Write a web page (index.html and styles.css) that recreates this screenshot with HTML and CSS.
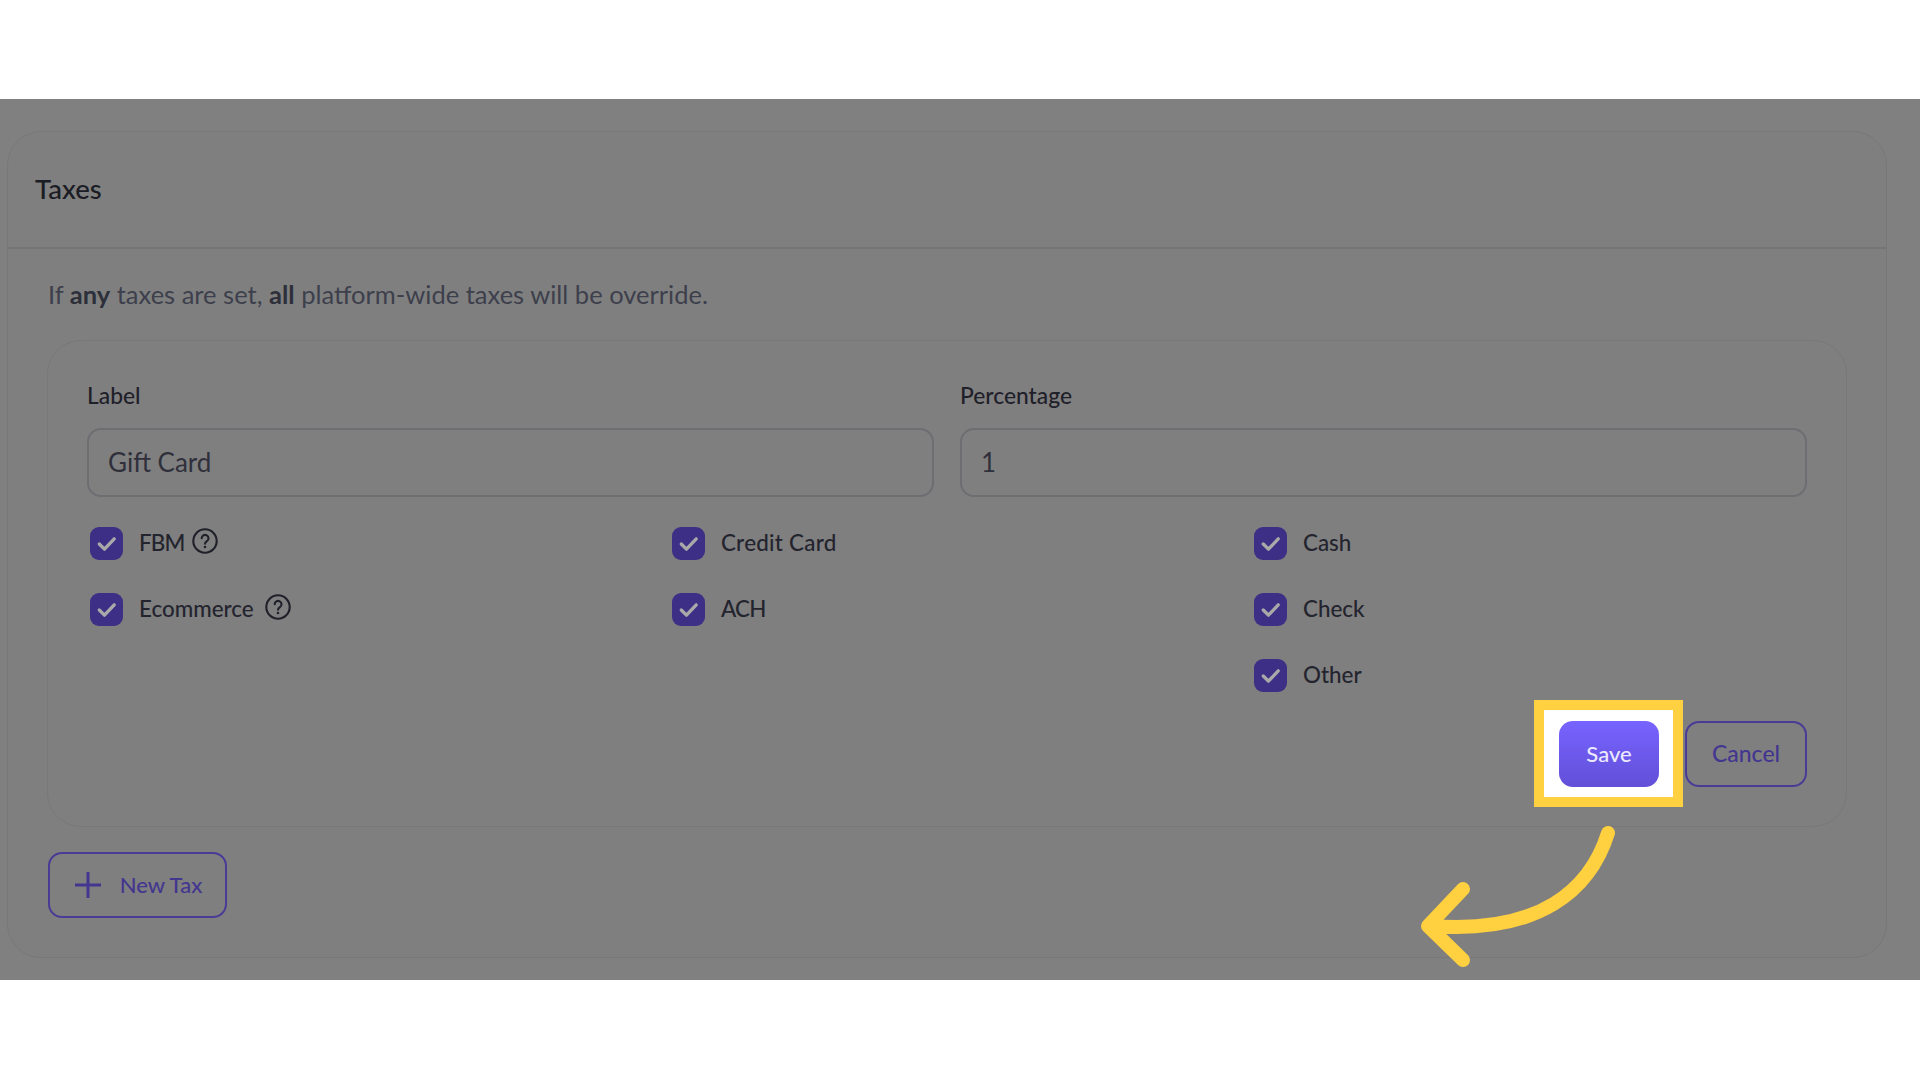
FILE: index.html
```html
<!DOCTYPE html>
<html lang="en">
<head>
<meta charset="utf-8">
<title>Taxes</title>
<link rel="stylesheet" href="styles.css">
</head>
<body>
<main class="band">
  <section class="card">
    <header class="card-head"><h1 class="title">Taxes</h1></header>
    <div class="card-body">
      <p class="note">If <b>any</b> taxes are set, <b>all</b> platform-wide taxes will be override.</p>
      <div class="form-card">
        <div class="fields">
          <label class="field"><span class="field-label">Label</span><span class="input">Gift Card</span></label>
          <label class="field"><span class="field-label">Percentage</span><span class="input">1</span></label>
        </div>
        <div class="checks">
          <div class="check"><span class="box"><svg viewBox="0 0 32 32"><path d="M9 16.5l5 5 9.5-10"/></svg></span><span class="text narrow">FBM</span><svg class="help help-near" viewBox="0 0 26 26"><circle cx="13" cy="13" r="11.7"/><path d="M9.7 10.3a3.4 3.4 0 1 1 5.2 2.9c-1.2.8-1.9 1.3-1.9 2.6"/><circle class="dot" cx="13" cy="19" r="1.3"/></svg></div>
          <div class="check"><span class="box"><svg viewBox="0 0 32 32"><path d="M9 16.5l5 5 9.5-10"/></svg></span><span class="text wide">Credit Card</span></div>
          <div class="check"><span class="box"><svg viewBox="0 0 32 32"><path d="M9 16.5l5 5 9.5-10"/></svg></span><span class="text">Cash</span></div>
          <div class="check"><span class="box"><svg viewBox="0 0 32 32"><path d="M9 16.5l5 5 9.5-10"/></svg></span><span class="text">Ecommerce</span><svg class="help" viewBox="0 0 26 26"><circle cx="13" cy="13" r="11.7"/><path d="M9.7 10.3a3.4 3.4 0 1 1 5.2 2.9c-1.2.8-1.9 1.3-1.9 2.6"/><circle class="dot" cx="13" cy="19" r="1.3"/></svg></div>
          <div class="check"><span class="box"><svg viewBox="0 0 32 32"><path d="M9 16.5l5 5 9.5-10"/></svg></span><span class="text narrow">ACH</span></div>
          <div class="check"><span class="box"><svg viewBox="0 0 32 32"><path d="M9 16.5l5 5 9.5-10"/></svg></span><span class="text">Check</span></div>
          <div class="check check-last"><span class="box"><svg viewBox="0 0 32 32"><path d="M9 16.5l5 5 9.5-10"/></svg></span><span class="text">Other</span></div>
        </div>
        <div class="actions">
          <button class="btn save" type="button"><span class="save-label">Save</span></button>
          <button class="btn ghost cancel" type="button">Cancel</button>
        </div>
      </div>
      <button class="btn ghost new-tax" type="button"><svg class="plus" viewBox="0 0 26 26"><path d="M13 0v26M0 13h26"/></svg><span class="new-tax-label">New Tax</span></button>
    </div>
  </section>
  <svg class="arrow" viewBox="0 0 1920 1080"><path d="M1608 833C1590 890 1540 934 1432 926M1463 889L1428 926L1463 960"/></svg>
</main>
</body>
</html>
```
FILE: styles.css
```css
* { box-sizing: border-box; }
html, body { margin: 0; height: 1080px; background: #fff; overflow: hidden; }
body { padding-top: 99px; font-family: Lato, "Liberation Sans", sans-serif; color: #1f2029; }
.band { height: 881px; background: #808080; padding: 32px 33px 0 7px; }
.card { height: 827px; border: 1px solid #787878; border-radius: 34px; background: #7f7f7f; }
.card-head { height: 117px; display: flex; align-items: center; padding: 0 0 2px 27px; border-bottom: 2px solid #757575; }
.title { margin: 0; font-size: 27.5px; font-weight: 500; color: #1b1c24; }
.card-body { padding: 27px 39px 0 39px; }
.note { margin: 0 0 28px 1px; padding-bottom: 0; font-size: 25.5px; line-height: 36px; color: #3d3f4c; }
.note b { font-weight: 700; color: #2d2f3a; }
.form-card { height: 487px; border: 1px solid #787878; border-radius: 34px; padding: 43px 39px 0 39px; }
.fields { display: grid; grid-template-columns: 847px 847px; column-gap: 26px; }
.field { display: block; }
.field-label { display: block; font-size: 22.8px; line-height: 23px; font-weight: 500; color: #1f2029; margin-bottom: 21px; }
.input { display: flex; align-items: center; height: 69px; padding: 0 19px 2px; border: 2px solid #6e6e72; border-radius: 14px; font-size: 26px; color: #2f303b; }
.checks { display: grid; grid-template-columns: repeat(3, 582px); row-gap: 34px; padding: 30px 0 0 3px; }
.check { display: flex; align-items: center; height: 32px; font-size: 22.4px; font-weight: 500; color: #23242e; }
.text { padding-bottom: 2px; }
.narrow { letter-spacing: -0.8px; }
.wide { letter-spacing: 0.25px; }
.check-last { grid-column: 3; }
.box { flex: none; width: 33px; height: 33px; margin-right: 16px; border-radius: 9px; background: #3c2f85; }
.box svg { display: block; width: 33px; height: 33px; fill: none; stroke: #a9a9a9; stroke-width: 3.2; stroke-linecap: round; stroke-linejoin: round; }
.help { width: 26px; height: 26px; margin: -4px 0 0 11px; fill: none; stroke: #1f2029; stroke-width: 2.1; stroke-linecap: round; }
.help-near { margin-left: 7px; }
.help .dot { fill: #1f2029; stroke: none; }
.actions { display: flex; justify-content: flex-end; gap: 26px; margin-top: 30px; }
.btn { display: inline-flex; align-items: center; justify-content: center; height: 66px; border-radius: 14px; font-family: inherit; font-size: 22px; font-weight: 500; padding: 0 0 2px; }
.save { position: relative; width: 100px; border: 0; background: linear-gradient(#7763ff, #6250d8); color: #ece9ff; }
.save::before { content: ""; position: absolute; left: -25px; right: -24px; top: -21px; bottom: -20px; background: #fff; border: 10px solid #ffd03f; z-index: 0; }
.save::after { content: ""; position: absolute; inset: 0; border-radius: 14px; background: linear-gradient(#7763ff, #6250d8); z-index: 1; }
.save-label { position: relative; z-index: 2; }
.ghost { background: transparent; border: 2px solid #4a3b96; color: #43368f; }
.cancel { width: 122px; font-size: 23px; }
.new-tax { width: 179px; margin: 25px 0 0 1px; padding-bottom: 0; }
.new-tax-label { padding-bottom: 2px; }
.plus { width: 26px; height: 26px; margin: 0 19px 0 2px; fill: none; stroke: #43368f; stroke-width: 3; }
.arrow { position: absolute; left: 0; top: 0; width: 1920px; height: 1080px; fill: none; stroke: #ffd03f; stroke-width: 14; stroke-linecap: round; stroke-linejoin: round; pointer-events: none; }
```
